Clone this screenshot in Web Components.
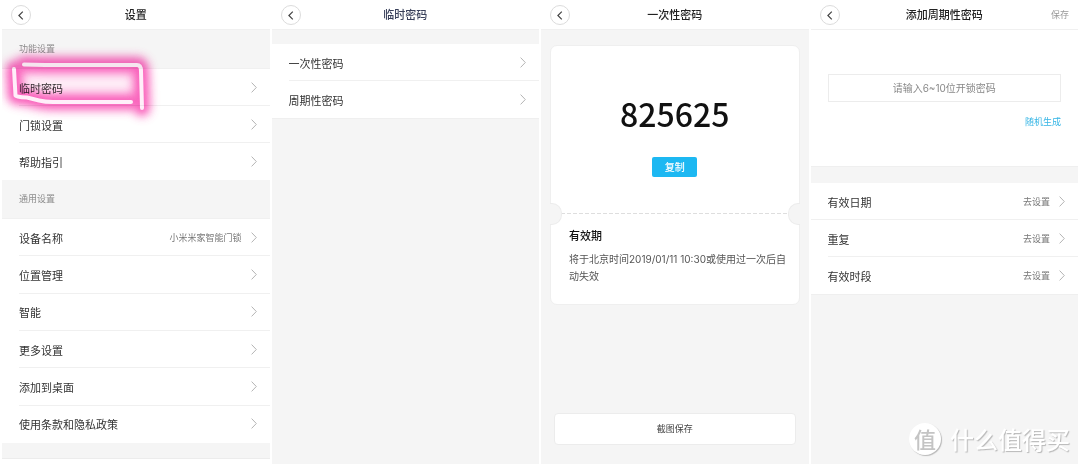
<!DOCTYPE html>
<html lang="zh-CN">
<head>
<meta charset="utf-8">
<meta name="viewport" content="width=device-width, initial-scale=1">
<title>门锁设置</title>
<style>
  body { margin: 0; background: #fff; color: #333; font: 11px/16px Inter, "Noto Sans CJK SC", sans-serif; }
</style>
</head>
<body>
<lock-board>
  <app-screen heading="设置">
    <section-title>功能设置</section-title>
    <row-group>
      <setting-row label="临时密码"><ink-mark></ink-mark></setting-row>
      <setting-row label="门锁设置"></setting-row>
      <setting-row label="帮助指引" last></setting-row>
    </row-group>
    <section-title>通用设置</section-title>
    <row-group grow>
      <setting-row label="设备名称" value="小米米家智能门锁"></setting-row>
      <setting-row label="位置管理"></setting-row>
      <setting-row label="智能"></setting-row>
      <setting-row label="更多设置"></setting-row>
      <setting-row label="添加到桌面"></setting-row>
      <setting-row label="使用条款和隐私政策" last></setting-row>
    </row-group>
    <list-end></list-end>
  </app-screen>

  <app-screen heading="临时密码" tint>
    <row-group spaced>
      <setting-row label="一次性密码"></setting-row>
      <setting-row label="周期性密码" last></setting-row>
    </row-group>
  </app-screen>

  <app-screen heading="一次性密码">
    <code-ticket code="825625">
      <span slot="title">有效期</span>
      将于北京时间2019/01/11 10:30或使用过一次后自动失效
    </code-ticket>
    <wide-button>截图保存</wide-button>
  </app-screen>

  <app-screen heading="添加周期性密码" action="保存">
    <code-form></code-form>
    <row-group spaced>
      <setting-row label="有效日期" value="去设置" full></setting-row>
      <setting-row label="重复" value="去设置"></setting-row>
      <setting-row label="有效时段" value="去设置" last></setting-row>
    </row-group>
    <site-mark></site-mark>
  </app-screen>
</lock-board>

<script>
const base = `*{box-sizing:border-box} button{font:inherit;color:inherit;margin:0;padding:0;border:0;background:none;cursor:pointer}`;

class Base extends HTMLElement {
  connectedCallback() {
    if (this.shadowRoot) return;
    this.attachShadow({ mode: "open" }).innerHTML = `<style>${base}${this.css()}</style>${this.html()}`;
  }
  attr(name) { return this.getAttribute(name) || ""; }
}

customElements.define("lock-board", class extends Base {
  css() { return `:host{display:grid;grid-template-columns:repeat(4,minmax(0,1fr));gap:2px;padding:0 2px 2px;min-height:100vh;box-sizing:border-box}`; }
  html() { return `<slot></slot>`; }
});

customElements.define("app-screen", class extends Base {
  css() { return `
    :host{display:flex;flex-direction:column;position:relative;overflow:hidden;background:#f5f5f5}
    header{display:grid;grid-template-columns:1fr auto 1fr;align-items:center;height:30px;padding:1px 9px 0;background:#fff;border-bottom:1px solid #f0f0f0}
    h1{margin:0;font-size:11px;line-height:16px;font-weight:500;color:#222}
    :host([tint]) h1{color:#39405a}
    .back{width:20px;height:20px;border:1px solid #dcdcdc;border-radius:50%;display:grid;place-items:center}
    .act{justify-self:end;font-size:9px;color:#999}
    main{flex:1;display:flex;flex-direction:column}`; }
  html() { return `
    <header>
      <button class="back" aria-label="返回"><svg width="6" height="9" viewBox="0 0 6 9" fill="none" stroke="#444" stroke-width="1.2"><path d="M4.8.6.9 4.5l3.9 3.9"/></svg></button>
      <h1>${this.attr("heading")}</h1>
      ${this.attr("action") ? `<button class="act">${this.attr("action")}</button>` : ""}
    </header>
    <main><slot></slot></main>`; }
});

customElements.define("section-title", class extends Base {
  css() { return `:host{display:block;padding:11px 17px;border-bottom:1px solid #f0f0f0}h2{margin:0;font-size:9px;line-height:16px;font-weight:400;color:#8c8c8c}`; }
  html() { return `<h2><slot></slot></h2>`; }
});

customElements.define("row-group", class extends Base {
  css() { return `:host{display:flex;flex-direction:column;background:#fff}:host([grow]){flex:1}:host([spaced]){margin-top:14px;border-bottom:1px solid #efefef}`; }
  html() { return `<slot></slot>`; }
});

customElements.define("setting-row", class extends Base {
  css() { return `
    :host{display:flex;position:relative;flex:1 0 37px;padding-left:17px}
    :host([full]){padding-left:0}
    :host([full]) a{padding-left:17px}
    a{flex:1;display:flex;align-items:center;gap:9px;padding-right:13px;border-bottom:1px solid #f0f0f0;color:#333;text-decoration:none}
    :host([last]) a{border-bottom-color:transparent}
    .l{flex:1;padding-top:3px}
    .v{padding-top:1px;font-size:9px;color:#777}`; }
  html() { return `
    <a href="#"><span class="l">${this.attr("label")}</span>
      ${this.attr("value") ? `<span class="v">${this.attr("value")}</span>` : ""}
      <svg width="6" height="11" viewBox="0 0 6 11" fill="none" stroke="#b4b4b4"><path d="M.6.6 5.3 5.5.6 10.4"/></svg></a>
    <slot></slot>`; }
});

/* Hand-drawn glowing frame over a row */
customElements.define("ink-mark", class extends Base {
  css() { return `:host{position:absolute;left:-2px;top:-29px;pointer-events:none;mix-blend-mode:multiply}svg{display:block}`; }
  html() {
    const a = "M24 24.5 45 25H137Q141 25 141 31L142 68";
    const b = "M14 29 15.5 55.5Q16 57 27 57.5L39 60.5Q45 62 53 62L131 62";
    return `<svg width="180" height="100" viewBox="0 0 180 100" fill="none" stroke-linecap="round" stroke-linejoin="round" aria-hidden="true">
      <defs>
        <filter id="g" filterUnits="userSpaceOnUse" x="-20" y="-10" width="210" height="120"><feGaussianBlur stdDeviation="5"/></filter>
        <filter id="s" filterUnits="userSpaceOnUse" x="-20" y="-10" width="210" height="120"><feGaussianBlur stdDeviation="3"/></filter>
      </defs>
      <path d="M14 25H141V62H50L14 56Z" fill="#fa50b4" opacity=".1"/>
      <g filter="url(#g)" stroke="#f95ab8" stroke-width="17" opacity=".85"><path d="${a}"/><path d="${b}"/></g>
      <g filter="url(#s)" stroke="#f850b4" stroke-width="8" opacity=".45"><path d="${a}"/><path d="${b}"/></g>
      <g stroke="#ffeff9" stroke-width="4"><path d="${a}"/><path d="${b}"/></g>
    </svg>`;
  }
});

customElements.define("list-end", class extends Base {
  css() { return `:host{display:block;height:21px;background:#fff}div{height:16px;background:#f5f5f5;border-bottom:1px solid #ececec}`; }
  html() { return `<div></div>`; }
});

customElements.define("code-ticket", class extends Base {
  css() { return `
    :host{display:block;margin:15px 9px 0;background:#fff;border:1px solid #efefef;border-radius:7px}
    .top{display:flex;flex-direction:column;align-items:center;gap:20px;padding:43px 0 36px}
    output{font:500 32px/48px "Noto Sans CJK SC",sans-serif;color:#111}
    .copy{width:45px;height:20px;border-radius:2px;background:#1db8f2;color:#fff;font-size:10px;line-height:20px;font-weight:500}
    .cut{position:relative;height:1px;margin:0 10px;background:repeating-linear-gradient(90deg,#dedede 0 4px,transparent 4px 6px)}
    .cut::before,.cut::after{content:"";position:absolute;top:-10px;width:11px;height:20px;background:#f5f5f5;border:1px solid #ececec}
    .cut::before{left:-11px;border-left:0;border-radius:0 10px 10px 0}
    .cut::after{right:-11px;border-right:0;border-radius:10px 0 0 10px}
    .info{padding:14px 9px 19px 18px}
    h2{margin:0 0 6px;font-size:11px;line-height:17px;font-weight:500;color:#111}
    p{margin:0;font-size:10px;line-height:17px;color:#555}`; }
  html() { return `
    <div class="top"><output>${this.attr("code")}</output><button class="copy">复制</button></div>
    <div class="cut"></div>
    <div class="info"><h2><slot name="title"></slot></h2><p><slot></slot></p></div>`; }
});

customElements.define("wide-button", class extends Base {
  css() { return `:host{display:flex;margin:auto 13px 19px}button{flex:1;height:32px;background:#fff;border:1px solid #ececec;border-radius:4px;font-size:9px;color:#444}`; }
  html() { return `<button><slot></slot></button>`; }
});

customElements.define("code-form", class extends Base {
  css() { return `
    :host{display:block;margin-bottom:2px;background:#fff;border-bottom:1px solid #efefef}
    form{display:flex;flex-direction:column;align-items:flex-end;gap:12px;padding:44px 17px 36px}
    input{width:100%;height:28px;padding:0;border:1px solid #ececec;border-radius:0;background:#fff;font:inherit;font-size:10px;text-align:center;outline:0}
    input::placeholder{color:#888;opacity:1}
    .gen{font-size:9px;color:#35b5e5}`; }
  html() { return `<form><input type="text" inputmode="numeric" aria-label="开锁密码" placeholder="请输入6~10位开锁密码"><button type="button" class="gen">随机生成</button></form>`; }
});

customElements.define("site-mark", class extends Base {
  css() { return `
    :host{position:absolute;right:8px;bottom:9px;display:flex;align-items:center;gap:9px;color:#fff;font:500 24px/32px "Noto Sans CJK SC",sans-serif;text-shadow:1px 1px 1px #b8b8b8}
    .seal{width:32px;height:32px;border-radius:50%;background:#fff;box-shadow:1px 1px 1px #b8b8b8;color:#c4c4c4;font-size:22px;line-height:31px;text-align:center;text-shadow:none}`; }
  html() { return `<span class="seal">值</span><span>什么值得买</span>`; }
});
</script>
</body>
</html>
